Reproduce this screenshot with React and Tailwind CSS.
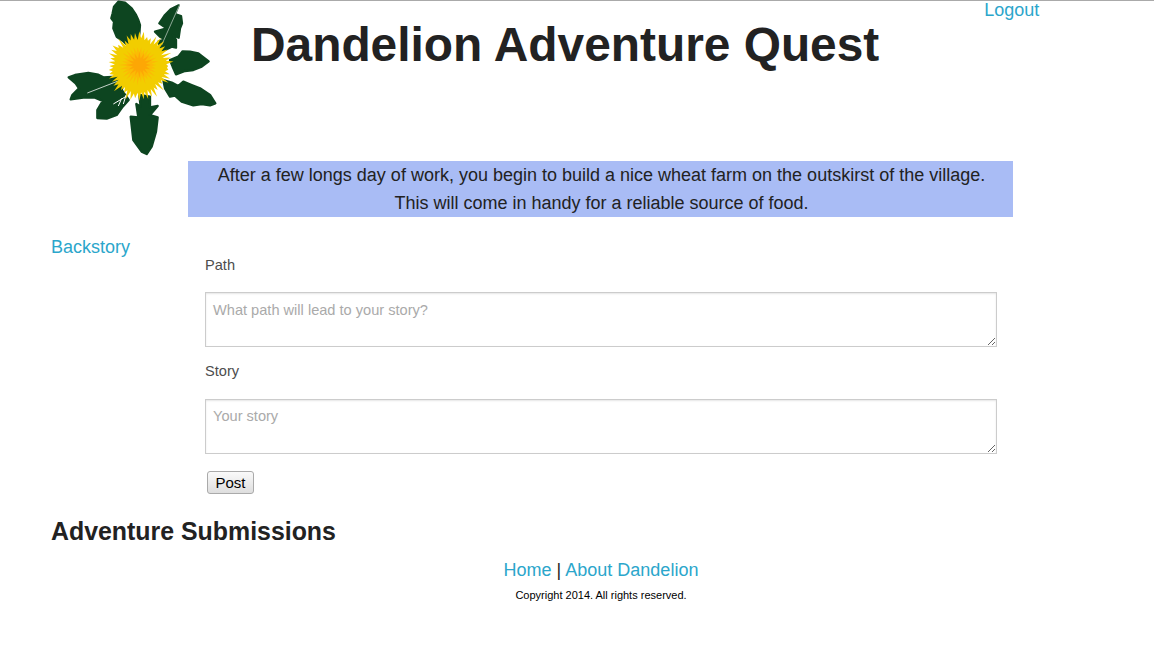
import React from "react";

const font = { fontFamily: '"Liberation Sans", Arial, sans-serif' };

// spiky polygon around the flower head, radii vary so the petals look uneven
const rays = (cx, cy, outer, inner, count) => {
  const pts = [];
  for (let i = 0; i < count; i++) {
    const a = (i / count) * Math.PI * 2;
    const noise = Math.abs(Math.sin(i * 12.9898) * 43758.5453) % 1;
    const r = i % 2 === 0 ? outer * (0.8 + 0.2 * noise) : inner * (0.9 + 0.15 * noise);
    pts.push(`${(cx + Math.cos(a) * r).toFixed(1)},${(cy + Math.sin(a) * r).toFixed(1)}`);
  }
  return pts.join(" ");
};

const Logo = () => (
  <svg viewBox="0 0 540 480" className="w-[180px] h-[160px] shrink-0">
    <g fill="#0d4520" stroke="#0d4520" strokeWidth="7" strokeLinejoin="round">
      {/* top left leaf */}
      <path d="M205 5 L225 8 L245 25 L258 45 L265 60 L270 75 L268 100 L262 135 L235 138 L218 122 L200 110 L190 85 L192 65 L184 55 L188 40 L192 20 Z" />
      {/* top right leaf */}
      <path d="M386 16 L362 28 L345 45 L328 70 L340 78 L350 85 L315 95 L330 110 L345 118 L325 125 L335 155 L365 140 L378 143 L378 120 L368 105 L386 113 L390 85 L396 70 L393 48 L375 42 Z" />
      {/* right leaf */}
      <path d="M398 154 L420 155 L445 160 L476 184 L455 200 L430 210 L405 213 L378 223 L368 200 L360 180 L385 170 Z" />
      {/* lower right leaf */}
      <path d="M340 240 L365 248 L385 258 L400 245 L425 255 L450 265 L480 285 L496 310 L480 316 L455 312 L430 316 L395 305 L375 287 L360 290 L345 265 Z" />
      {/* left leaf */}
      <path d="M56 232 L75 225 L115 219 L145 224 L160 232 L200 230 L230 225 L215 270 L236 300 L218 320 L200 345 L170 356 L142 354 L142 330 L158 303 L135 293 L100 293 L62 298 L67 285 L87 265 L77 250 Z" />
      {/* stalk and bottom leaf */}
      <path d="M268 285 L300 290 L300 322 L323 318 L300 345 L323 352 L318 395 L305 440 L290 462 L275 455 L250 420 L242 350 L265 352 L259 312 L272 320 Z" />
    </g>
    <g fill="none" stroke="#ffffff">
      <path d="M388 16 L335 135" strokeWidth="2" opacity="0.8" />
      <path d="M112 279 L225 235" strokeWidth="2.5" opacity="0.9" />
      <path d="M190 312 L235 285 M205 318 L215 295 M220 312 L228 285" strokeWidth="3" />
    </g>
    <polygon points={rays(268, 198, 108, 80, 96)} fill="#f2cd00" />
    <polygon points={rays(268, 195, 62, 36, 60)} fill="#fbbb05" />
    <polygon points={rays(268, 195, 42, 20, 32)} fill="#fda705" />
  </svg>
);

const Field = ({ label, placeholder, labelClass, areaClass }) => (
  <div className="flex flex-col">
    <label className={`text-[14.6px] leading-[21px] text-[#4d4d4d] ${labelClass}`}>{label}</label>
    <textarea
      placeholder={placeholder}
      className={`block w-full h-[55px] mt-[10px] px-[7px] text-[14.6px] leading-[21px] bg-white text-[#222] border border-[#ccc] shadow-[inset_0_1px_2px_rgba(0,0,0,0.1)] placeholder:text-[#aaa] outline-none ${areaClass}`}
    />
  </div>
);

const App = () => {
  return (
    <div className="min-h-[647px] bg-white text-[#222] border-t border-[#aaa]" style={font}>
      {/* header */}
      <div className="flex h-[160px]">
        <div className="ml-[50px] -mt-px">
          <Logo />
        </div>
        <h1 className="ml-[21px] mt-[14px] text-[47.85px] leading-[60px] font-bold whitespace-nowrap">
          Dandelion Adventure Quest
        </h1>
        <a href="#" className="ml-[105px] -mt-[2px] text-lg leading-[22px] text-[#2ba6cb]">
          Logout
        </a>
      </div>

      {/* banner */}
      <div className="ml-[188px] w-[825px] h-[56px] pl-[2px] bg-[#a9bcf5] text-center text-lg leading-[28px]">
        <p>After a few longs day of work, you begin to build a nice wheat farm on the outskirst of the village.</p>
        <p>This will come in handy for a reliable source of food.</p>
      </div>

      {/* main */}
      <div className="flex mt-[20px]">
        <div className="w-[188px] pl-[51px]">
          <a href="#" className="block text-lg leading-[20px] text-[#2ba6cb]">
            Backstory
          </a>
        </div>
        <div className="w-[825px] pl-[17px] pr-[16px] pt-[18px]">
          <Field
            label="Path"
            placeholder="What path will lead to your story?"
            labelClass="h-[27px]"
            areaClass="pt-[7px] mb-[14px]"
          />
          <Field
            label="Story"
            placeholder="Your story"
            labelClass="h-[28px]"
            areaClass="pt-[6px] mb-[15px]"
          />
          <button className="ml-[2px] mt-[2px] block w-[47px] h-[23px] text-[15px] leading-[20px] text-black border border-[#aaa] rounded-[3px] bg-gradient-to-b from-[#fafafa] to-[#dedede]">
            Post
          </button>
        </div>
      </div>

      <h2 className="ml-[51px] mt-[21px] text-[24.9px] leading-[32px] font-bold">Adventure Submissions</h2>

      {/* footer */}
      <div className="ml-[188px] w-[825px] pl-[1px] text-center mt-[9px]">
        <div className="text-lg leading-[28px]">
          <a href="#" className="text-[#2ba6cb]">Home</a> | <a href="#" className="text-[#2ba6cb]">About Dandelion</a>
        </div>
        <p className="mt-[3px] text-[11px] leading-[16px] text-black">Copyright 2014. All rights reserved.</p>
      </div>
    </div>
  );
};

export default App;
